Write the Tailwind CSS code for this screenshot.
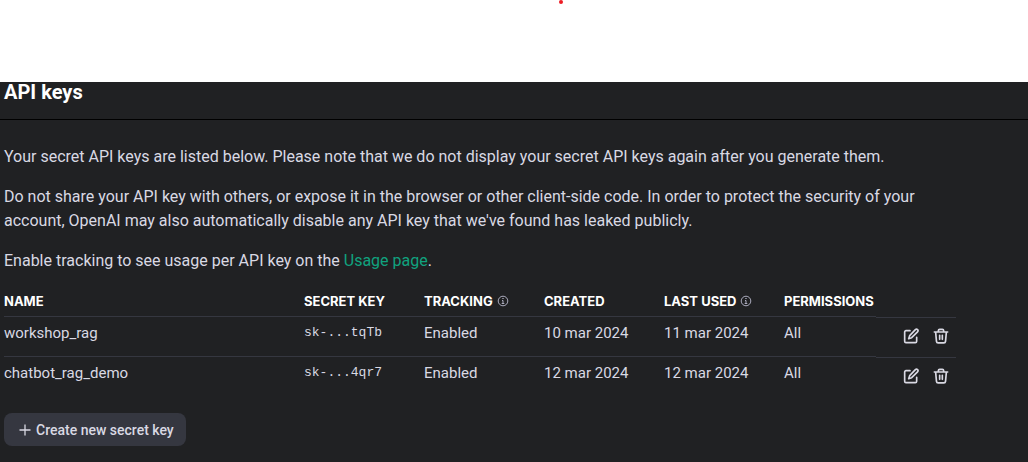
<!DOCTYPE html>
<html lang="en">
<head>
<meta charset="utf-8">
<title>API keys</title>
<script src="https://cdn.jsdelivr.net/npm/@tailwindcss/browser@4"></script>
</head>
<body class="flex min-h-screen flex-col bg-white font-[Roboto,Arial,sans-serif] text-base text-[#d9d9e3]">
<svg width="0" height="0" class="absolute" aria-hidden="true">
  <symbol id="info" viewBox="0 0 12 12" fill="none" stroke="currentColor">
    <circle cx="6" cy="6" r="4.8"/>
    <path d="M5 5.500h1v3M4.700 8.500h2.600M5.300 3.500h1.400"/>
  </symbol>
  <symbol id="edit" viewBox="0 0 24 24" fill="none" stroke="currentColor" stroke-width="2.5" stroke-linecap="round" stroke-linejoin="round">
    <path d="M10.500 4H4.500a2 2 0 0 0-2 2v14a2 2 0 0 0 2 2h14a2 2 0 0 0 2-2v-6"/>
    <path d="M18.600 2.500a2.200 2.200 0 0 1 3.200 3.200L13 14.500l-4.500 1.500 1.500-4.500z"/>
  </symbol>
  <symbol id="trash" viewBox="0 0 24 24" fill="none" stroke="currentColor" stroke-width="2.5" stroke-linecap="round" stroke-linejoin="round">
    <path d="M2 6h20M8 5.500V4A2 2 0 0 1 10 2h4a2 2 0 0 1 2 2V5.500M4 6.500l1.200 13.500a2.500 2.500 0 0 0 2.500 2.200h8.600a2.500 2.500 0 0 0 2.500-2.200l1.200-13.500M10 11v6M14 11v6"/>
  </symbol>
</svg>
<div class="flex h-[82px] shrink-0 justify-center pl-[94px]"><span class="size-1 rounded-full bg-[#ed1c24]"></span></div>
<main class="grow bg-[#202123]">
  <header class="border-b border-black px-1 pb-[17px]">
    <h1 class="text-xl leading-5 font-bold text-white">API keys</h1>
  </header>
  <div class="flex flex-col gap-4 pt-[25px] pr-[72px] pl-1 leading-6">
    <p>Your secret API keys are listed below. Please note that we do not display your secret API keys again after you generate them.</p>
    <p>Do not share your API key with others, or expose it in the browser or other client-side code. In order to protect the security of your account, OpenAI may also automatically disable any API key that we've found has leaked publicly.</p>
    <p>Enable tracking to see usage per API key on the <a href="#usage" class="text-[#10a37f]">Usage page</a>.</p>
    <table class="w-full table-fixed border-separate border-spacing-0 text-left">
      <colgroup><col><col class="w-[120px]"><col class="w-[120px]"><col class="w-[120px]"><col class="w-[120px]"><col class="w-[92px]"><col class="w-20"></colgroup>
      <thead class="font-[Inter,sans-serif] text-[13px] leading-5 text-white">
        <tr class="whitespace-nowrap">
          <th class="h-7 border-b border-[#353740] pb-1 font-bold">NAME</th>
          <th class="border-b border-[#353740] pb-1 font-bold">SECRET KEY</th>
          <th class="border-b border-[#353740] pb-1 font-bold"><span class="flex items-center gap-1">TRACKING<svg class="size-3 text-[#acacbe]" role="img" aria-label="About tracking"><use href="#info"/></svg></span></th>
          <th class="border-b border-[#353740] pb-1 font-bold">CREATED</th>
          <th class="border-b border-[#353740] pb-1 font-bold"><span class="flex items-center gap-1">LAST USED<svg class="size-3 text-[#acacbe]" role="img" aria-label="About last used"><use href="#info"/></svg></span></th>
          <th class="border-b border-[#353740] pb-1 font-bold">PERMISSIONS</th>
          <td></td>
        </tr>
      </thead>
      <tbody class="text-[15px]">
        <tr class="h-10 align-top">
          <td class="border-b border-[#353740] pt-1">workshop_rag</td>
          <td class="border-b border-[#353740] pt-1 font-['Liberation_Mono',monospace] text-[13px] leading-6">sk-...tqTb</td>
          <td class="border-b border-[#353740] pt-1">Enabled</td>
          <td class="border-b border-[#353740] pt-1">10 mar 2024</td>
          <td class="border-b border-[#353740] pt-1">11 mar 2024</td>
          <td class="border-b border-[#353740] pt-1">All</td>
          <td class="border-t border-[#353740] pt-[10px]"><span class="flex justify-end gap-[14px] pr-[7px]"><button aria-label="Edit workshop_rag"><svg class="size-4"><use href="#edit"/></svg></button><button aria-label="Delete workshop_rag"><svg class="size-4"><use href="#trash"/></svg></button></span></td>
        </tr>
        <tr class="h-10 align-top">
          <td class="pt-1">chatbot_rag_demo</td>
          <td class="pt-1 font-['Liberation_Mono',monospace] text-[13px] leading-6">sk-...4qr7</td>
          <td class="pt-1">Enabled</td>
          <td class="pt-1">12 mar 2024</td>
          <td class="pt-1">12 mar 2024</td>
          <td class="pt-1">All</td>
          <td class="border-t border-[#353740] pt-[10px]"><span class="flex justify-end gap-[14px] pr-[7px]"><button aria-label="Edit chatbot_rag_demo"><svg class="size-4"><use href="#edit"/></svg></button><button aria-label="Delete chatbot_rag_demo"><svg class="size-4"><use href="#trash"/></svg></button></span></td>
        </tr>
      </tbody>
    </table>
    <button class="flex items-center gap-1 self-start rounded-lg bg-[#353740] px-3 pt-[7px] pb-[5px] text-sm leading-[21px] font-medium"><svg class="size-4" viewBox="0 0 16 16" fill="none" stroke="currentColor" stroke-width="1.3"><path d="M9 1.500v11M3.500 7h11"/></svg>Create new secret key</button>
  </div>
</main>
</body>
</html>
